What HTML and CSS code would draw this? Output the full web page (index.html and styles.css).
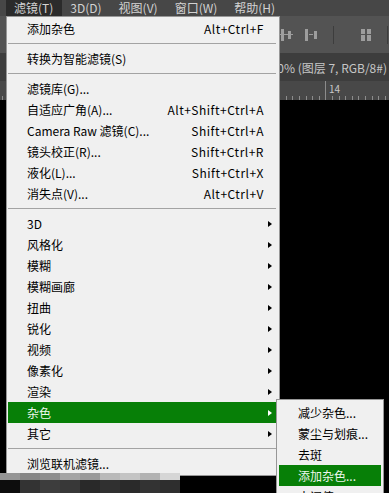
FILE: index.html
```html
<!DOCTYPE html>
<html lang="zh-CN">

<head>
    <meta charset="UTF-8">
    <meta name="viewport" content="width=device-width, initial-scale=1.0">
    <title>滤镜菜单</title>
    <link rel="stylesheet" href="styles.css">
</head>

<body>

    <div class="app">
        <!-- top menu bar -->
        <div class="menubar">
            <span class="menubar-item active">滤镜(T)</span>
            <span class="menubar-item">3D(D)</span>
            <span class="menubar-item">视图(V)</span>
            <span class="menubar-item">窗口(W)</span>
            <span class="menubar-item">帮助(H)</span>
        </div>

        <!-- options bar with align icons -->
        <div class="options-bar">
            <svg class="tool-icon first" width="13" height="16" viewBox="0 0 13 16">
                <rect x="1" y="2" width="3" height="12" />
                <rect x="8" y="4" width="3" height="8" />
                <rect x="0" y="7" width="13" height="1" />
            </svg>
            <svg class="tool-icon" width="13" height="16" viewBox="0 0 13 16">
                <rect x="0" y="2" width="3" height="12" />
                <rect x="4" y="7" width="4" height="1" />
                <rect x="9" y="4" width="3" height="8" />
            </svg>
            <span class="tool-sep"></span>
            <svg class="tool-icon" width="11" height="16" viewBox="0 0 11 16">
                <rect x="0" y="2" width="4" height="5" />
                <rect x="0" y="8" width="4" height="6" />
                <rect x="6" y="2" width="4" height="5" />
                <rect x="6" y="8" width="4" height="6" />
            </svg>
            <span class="tool-sep"></span>
            <svg class="tool-icon" width="4" height="16" viewBox="0 0 4 16">
                <rect x="0" y="4" width="3" height="8" />
            </svg>
        </div>

        <!-- document tab -->
        <div class="doc-tab">
            <span>未标题-1 @ 100% (图层 7, RGB/8#)</span>
        </div>

        <!-- ruler -->
        <div class="ruler">
            <span class="ruler-major">14</span>
        </div>

        <div class="canvas"></div>

        <!-- blurred strip at the bottom -->
        <div class="mosaic"></div>

        <!-- filter dropdown -->
        <div class="menu">
            <div class="menu-item"><span class="label">添加杂色</span><span class="shortcut">Alt+Ctrl+F</span><span class="arrow-cell"></span></div>
            <div class="sep"></div>
            <div class="menu-item"><span class="label">转换为智能滤镜(S)</span><span class="arrow-cell"></span></div>
            <div class="sep"></div>
            <div class="menu-item"><span class="label">滤镜库(G)...</span><span class="arrow-cell"></span></div>
            <div class="menu-item"><span class="label">自适应广角(A)...</span><span class="shortcut">Alt+Shift+Ctrl+A</span><span class="arrow-cell"></span></div>
            <div class="menu-item"><span class="label">Camera Raw 滤镜(C)...</span><span class="shortcut">Shift+Ctrl+A</span><span class="arrow-cell"></span></div>
            <div class="menu-item"><span class="label">镜头校正(R)...</span><span class="shortcut">Shift+Ctrl+R</span><span class="arrow-cell"></span></div>
            <div class="menu-item"><span class="label">液化(L)...</span><span class="shortcut">Shift+Ctrl+X</span><span class="arrow-cell"></span></div>
            <div class="menu-item"><span class="label">消失点(V)...</span><span class="shortcut">Alt+Ctrl+V</span><span class="arrow-cell"></span></div>
            <div class="sep"></div>
            <div class="menu-item"><span class="label">3D</span><span class="arrow-cell"><i class="arrow"></i></span></div>
            <div class="menu-item"><span class="label">风格化</span><span class="arrow-cell"><i class="arrow"></i></span></div>
            <div class="menu-item"><span class="label">模糊</span><span class="arrow-cell"><i class="arrow"></i></span></div>
            <div class="menu-item"><span class="label">模糊画廊</span><span class="arrow-cell"><i class="arrow"></i></span></div>
            <div class="menu-item"><span class="label">扭曲</span><span class="arrow-cell"><i class="arrow"></i></span></div>
            <div class="menu-item"><span class="label">锐化</span><span class="arrow-cell"><i class="arrow"></i></span></div>
            <div class="menu-item"><span class="label">视频</span><span class="arrow-cell"><i class="arrow"></i></span></div>
            <div class="menu-item"><span class="label">像素化</span><span class="arrow-cell"><i class="arrow"></i></span></div>
            <div class="menu-item"><span class="label">渲染</span><span class="arrow-cell"><i class="arrow"></i></span></div>
            <div class="menu-item active">
                <span class="label">杂色</span><span class="arrow-cell"><i class="arrow"></i></span>
                <div class="submenu">
                    <div class="menu-item"><span class="label">减少杂色...</span></div>
                    <div class="menu-item"><span class="label">蒙尘与划痕...</span></div>
                    <div class="menu-item"><span class="label">去斑</span></div>
                    <div class="menu-item active"><span class="label">添加杂色...</span></div>
                    <div class="menu-item"><span class="label">中间值...</span></div>
                </div>
            </div>
            <div class="menu-item"><span class="label">其它</span><span class="arrow-cell"><i class="arrow"></i></span></div>
            <div class="sep"></div>
            <div class="menu-item"><span class="label">浏览联机滤镜...</span><span class="arrow-cell"></span></div>
        </div>
    </div>

</body>

</html>
```

FILE: styles.css
```css
* {
    box-sizing: border-box;
}

body {
    margin: 0;
    padding: 0;
    background: #000;
    font-family: "Noto Sans CJK SC", "Microsoft YaHei", sans-serif;
    font-size: 12px;
}

.app {
    position: relative;
    width: 389px;
    height: 493px;
    overflow: hidden;
    display: flex;
    flex-direction: column;
    background: #000;
}

/* Menu bar */
.menubar {
    height: 16px;
    background: #474747;
    display: flex;
    padding-left: 6px;
    color: #d2d2d2;
    line-height: 15px;
    white-space: nowrap;
}

.menubar-item {
    padding: 0 9px 0 8px;
}

.menubar-item.active {
    background: #2b2b2b;
}

/* Options bar */
.options-bar {
    height: 37px;
    background: #535353;
    display: flex;
    align-items: center;
}

.tool-icon {
    fill: #9d9d9d;
    margin-left: 12px;
    flex-shrink: 0;
}

.tool-icon.first {
    margin-left: 280px;
}

.tool-sep {
    width: 1px;
    height: 18px;
    background: #3d3d3d;
    margin: 0 15px;
    flex-shrink: 0;
}

/* Document tab */
.doc-tab {
    height: 28px;
    background: #3d3d3d;
    display: flex;
    justify-content: flex-end;
    align-items: center;
    padding-right: 2px;
    color: #c6c6c6;
    white-space: nowrap;
    font-size: 12px;
}

/* Ruler */
.ruler {
    height: 19px;
    background-color: #484848;
    background-image: repeating-linear-gradient(to right, #8c8c8c 0 1px, transparent 1px 6.6px);
    background-size: 100% 4px;
    background-position: 2px bottom;
    background-repeat: no-repeat;
    display: flex;
}

.ruler-major {
    margin-left: 325px;
    padding-left: 3px;
    border-left: 1px solid #8c8c8c;
    color: #c8c8c8;
    font-size: 10px;
    line-height: 16px;
}

.canvas {
    flex: 1;
    background: #000;
}

/* Pixelated strip, only over the left part */
.mosaic {
    position: relative;
    z-index: 2;
    width: 180px;
    height: 20px;
    background:
        linear-gradient(to right, #959595 0 20px, #868686 20px 40px, #8e8e8e 40px 60px, #a4a4a4 60px 80px, #9a9a9a 80px 100px, #b9b9b9 100px 120px, #c4c4c4 120px 140px, #b2b2b2 140px 160px, #d6d6d6 160px 180px) top / 100% 7px no-repeat,
        linear-gradient(to right, #0d0d0d 0 20px, #333 20px 40px, #3d3d3d 40px 60px, #383838 60px 80px, #292929 80px 100px, #303030 100px 120px, #2a2a2a 120px 140px, #333 140px 160px, #2e2e2e 160px 180px) bottom / 100% 13px no-repeat,
        #000;
}

/* Dropdown menu */
.menu {
    position: absolute;
    z-index: 1;
    left: 6px;
    top: 16px;
    width: 274px;
    background: #f0f0f0;
    border: 1px solid #979797;
    padding: 1px 3px 1px 1px;
    color: #000;
}

.menu-item {
    position: relative;
    display: flex;
    height: 21px;
    line-height: 21px;
    padding-left: 19px;
    white-space: nowrap;
}

.menu-item .label {
    flex: 1;
}

.shortcut {
    text-align: right;
    letter-spacing: 0.5px;
}

.arrow-cell {
    width: 12px;
    display: flex;
    align-items: center;
    padding-left: 4px;
}

.arrow {
    width: 0;
    height: 0;
    border-left: 4px solid #000;
    border-top: 3.5px solid transparent;
    border-bottom: 3.5px solid transparent;
}

.menu-item.active {
    background: #077f07;
    color: #eef7ee;
}

.menu-item.active > .arrow-cell .arrow {
    border-left-color: #fff;
}

.sep {
    margin: 4px 0;
    border-top: 1px solid #a3a3a3;
}

/* Submenu */
.submenu {
    position: absolute;
    left: 100%;
    top: -3px;
    width: 108px;
    background: #f0f0f0;
    border: 1px solid #979797;
    padding: 2px;
    color: #000;
}
```
